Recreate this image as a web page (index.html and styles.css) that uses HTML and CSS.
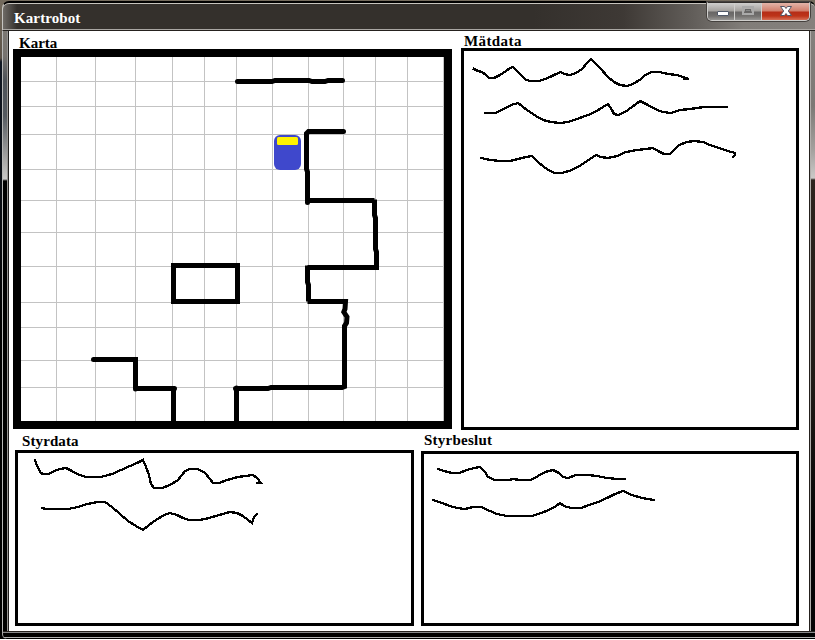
FILE: index.html
```
<!DOCTYPE html>
<html lang="sv">
<head>
<meta charset="utf-8">
<title>Kartrobot</title>
<link rel="stylesheet" href="styles.css">
</head>
<body>
<div class="window">
  <header class="titlebar">
    <h1>Kartrobot</h1>
    <div class="controls">
      <button class="control" aria-label="Minimera"><svg width="28" height="18"><rect x="9.500" y="8.500" width="11" height="4" rx=".5" fill="#fff" stroke="#525a69"/></svg></button>
      <button class="control" aria-label="Maximera"><svg width="26" height="18"><rect x="8" y="4" width="10" height="7" fill="none" stroke="#aaa" stroke-width="2"/><rect x="10.500" y="6.500" width="5" height="2" fill="#888" stroke="#666"/></svg></button>
      <button class="control close" aria-label="Stäng"><svg width="46" height="18"><path d="M18.500 3.500h4l1.500 2 1.500-2h4l-3.200 4.500 3.200 4.500h-4l-1.500-2-1.500 2h-4l3.200-4.500z" fill="#fff" stroke="#535666"/></svg></button>
    </div>
  </header>
  <div class="frame">
    <div class="side side-left"></div>
    <main class="content">
      <div class="row row-top">
        <section class="panel map">
          <h2>Karta</h2>
          <svg class="plot" viewBox="21 57 423 364">
            <path class="grid" d="M56.500 57v364M95.500 57v364M135.500 57v364M172.500 57v364M204.500 57v364M236.500 57v364M272.500 57v364M308.500 57v364M343.500 57v364M375.500 57v364M407.500 57v364M443.500 57v364M21 81.500h423M21 106.500h423M21 134.500h423M21 169.500h423M21 200.500h423M21 232.500h423M21 266.500h423M21 302.500h423M21 327.500h423M21 360.500h423M21 387.500h423"/>
            <g class="wall">
              <path d="M237.500 81.500H272L275 80.500H309L312 81.500H325L328 80.500H342.500"/>
              <path d="M343.500 131.500H308.500L306.500 133.500V169L307.500 172V202.500M307.500 200.500H374.500V199.500V215L375.500 218V249L376.500 252V267.500H307.500V265.500V282L308.500 285V301.500H307.500H345.500L345 309L343.800 312L347 317L346.500 323L344.500 326V386.500L342 387.500H271L268 388.500H235.500M236.500 388V423"/>
              <path d="M173.500 265.500H237.500V301.500H173.500Z"/>
              <path d="M93.500 359.500H135.500V389M135.500 388.500H174.500M173.500 388.500V423"/>
            </g>
            <rect x="274" y="135" width="27" height="35" rx="6" fill="#3f48cc"/>
            <rect x="277" y="137" width="21" height="8" rx="1.500" fill="#fff200"/>
          </svg>
        </section>
        <section class="panel measurements">
          <h2>Mätdata</h2>
          <svg class="plot" viewBox="464 51 332 376">
            <g class="trace">
              <path d="M474 69L478 71 482 72 486 75 489 78H494L500 75 506 71 510 68 513 67 516 70 521 75 526 80 531 81H539L545 79 550 77 556 74 561 72 564 74 570 75 576 73 582 69 587 63 591 59 596 64 601 69 607 76 614 82 620 85 627 86 633 84 641 79 645 75 652 72H659L668 74 677 75 683 77 689 79H684"/>
              <path d="M485 113H495L504 109 511 105 518 103 527 110 536 116 543 120 551 122 560 123 568 122 577 119 588 115 595 112 603 107 608 104 612 110 614 114 618 115 625 112 632 107 640 101 648 105 657 110 663 112 671 113 680 110 690 109 704 107 716 107H727"/>
              <path d="M481 158L490 160 500 161H510L518 159 526 157 532 156 537 161 544 167 550 171 555 173H562L572 170 581 165 590 159 596 155 601 157 608 158 617 156 626 152 637 150 646 149 653 148 658 151 664 154H670L674 150 679 145 687 142 694 141 703 142 710 145 719 148 728 151 735 153V155L733 157"/>
            </g>
          </svg>
        </section>
      </div>
      <div class="row row-bottom">
        <section class="panel control-data">
          <h2>Styrdata</h2>
          <svg class="plot" viewBox="18 453 393 170">
            <g class="trace">
              <path d="M35 460L37 466 41 473 43 474H49L54 471 60 469 66 468 72 471 77 474 86 477H101L112 474 121 470 130 466 137 463 143 460 146 467 149 475 151 484 154 488H162L170 485 178 480 185 471 190 469H198L205 473 210 479 213 483H219L227 480 238 477 253 475 257 478 261 483H257"/>
              <path d="M42 508L46 509H68L78 507 87 504 98 502H105L112 507 120 514 128 521 136 526 143 530 149 525 156 520 164 515 170 513 177 515 183 518 189 520H200L209 518 219 515 230 512 237 513 243 516 248 520 252 523 254 517 257 514"/>
            </g>
          </svg>
        </section>
        <section class="panel decisions">
          <h2>Styrbeslut</h2>
          <svg class="plot" viewBox="424 454 372 169">
            <g class="trace">
              <path d="M438 469L444 471 452 473H459L467 470 474 468 480 467 485 472 488 477 495 480H509L513 479 520 480H531L538 476 545 472 553 470 559 473 563 477 568 478 576 475 588 475 597 476 607 478 618 479H625"/>
              <path d="M433 500L442 503 450 506 457 508 465 509 473 507H481L490 511 497 514 507 516H532L541 513 549 510 556 506 560 503 564 506 571 508H581L589 505 598 502 607 498 615 494 623 491 632 495 642 498 654 500"/>
            </g>
          </svg>
        </section>
      </div>
    </main>
    <div class="side side-right"></div>
  </div>
  <footer class="bottom-frame"></footer>
</div>
</body>
</html>
```
FILE: styles.css
```
* { box-sizing: border-box; }

html { background: #fff; }

body {
  margin: 0;
  width: 815px;
  height: 639px;
  overflow: hidden;
  font-family: "Liberation Serif", "Times New Roman", serif;
}

h1, h2 {
  margin: 0;
  font-size: 15px;
  font-weight: bold;
  line-height: 17px;
}

.window {
  display: flex;
  flex-direction: column;
  height: 639px;
  padding: 1px 0 0 2px;
  background: linear-gradient(#746b5d 0, #5c5247 58px, #101722 62px, #080a0e 240px, #000 320px);
}

.titlebar {
  display: flex;
  justify-content: space-between;
  height: 30px;
  padding: 0 5px 0 11px;
  border-top: 2px solid #000;
  border-left: 1px solid #c5c4c1;
  border-bottom: 1px solid #25211e;
  border-radius: 7px 6px 0 0;
  background: linear-gradient(90deg, #6f6b66 0, #34302c 14px, #34302c 530px, #3e3935 620px, #625e5a 690px, #817d79 740px, #85817d 100%);
  box-shadow: inset 0 1px #c6c3bd, inset 0 -1px #aaa7a3;
}

.titlebar h1 {
  padding-top: 7px;
  color: #fff;
  letter-spacing: .1px;
}

.controls {
  display: flex;
  align-self: flex-start;
  width: 103px;
  height: 19px;
  margin-top: -1px;
  border: 1px solid #d0cfcd;
  border-top-color: #322f2d;
  border-radius: 0 0 5px 5px;
  box-shadow: 0 0 0 1px #45413e;
  overflow: hidden;
}

.control {
  width: 27px;
  flex: none;
  height: 18px;
  padding: 0;
  border: 0;
  border-right: 1px solid #d0cfcd;
  background: linear-gradient(#d0cfce 0, #a3a09d 8px, #686665 9px, #73716f 13px, #a1a09e 18px);
}

.control svg { display: block; }

.close {
  width: 47px;
  border: 0;
  background: linear-gradient(#e3b5a9 0, #d17e6b 8px, #b52d17 9px, #bd3419 13px, #dd7e65 18px);
}

.frame {
  display: flex;
  height: 600px;
}

.side { flex: none; }

.side-left {
  width: 7px;
  border-left: 1px solid #b8b8b7;
  border-right: 1px solid #201e1d;
  box-shadow: inset -1px 0 #969492;
  background: linear-gradient(#7c7873 0, #77736f 25px, #4e5359 50px, #565b61 85px, #aaa9a8 130px, #c8c7c6 148px, #000 150px);
}

.side-right {
  width: 6px;
  border-left: 1px solid #25211e;
  box-shadow: inset 1px 0 #b2afac;
  background: linear-gradient(#84807c 0, #7c7975 75px, #a5a29f 120px, #cbc9c7 147px, #2d241e 149px, #211b17 350px, #050505 500px);
}

.content {
  width: 800px;
  flex: none;
  background: #fff;
}

.row { display: flex; }

.row-top {
  height: 399px;
  padding-left: 4px;
  gap: 9px;
}

.row-bottom {
  padding-left: 6px;
  gap: 7px;
}

.panel h2 { color: #000; white-space: nowrap; }

.plot {
  display: block;
  border: 3px solid #000;
}

.map { width: 439px; }
.map h2 { height: 18px; padding: 4px 0 0 6px; }
.map .plot { width: 439px; height: 380px; border-width: 8px; }

.measurements h2 { height: 17px; padding: 2px 0 0 3px; letter-spacing: .4px; }
.measurements .plot { width: 338px; height: 382px; }

.control-data h2 { height: 20px; padding: 3px 0 0 7px; letter-spacing: .1px; }
.control-data .plot { width: 399px; height: 176px; }

.decisions h2 { height: 21px; padding: 2px 0 0 3px; letter-spacing: .25px; }
.decisions .plot { width: 378px; height: 175px; }

.grid {
  fill: none;
  stroke: #c3c3c3;
  shape-rendering: crispEdges;
}

.wall {
  fill: none;
  stroke: #000;
  stroke-width: 5;
  stroke-linecap: round;
}

.trace {
  fill: none;
  stroke: #000;
  stroke-width: 2.3;
  stroke-linecap: square;
  shape-rendering: crispEdges;
}

.bottom-frame {
  height: 8px;
  background: linear-gradient(#25211e 0 1px, #88888a 1px 2px, #000 2px 6px, #b0b0b0 6px 7px, #000 7px);
  border-left: 1px solid #a8a8a8;
  border-radius: 0 0 0 5px;
}
```
